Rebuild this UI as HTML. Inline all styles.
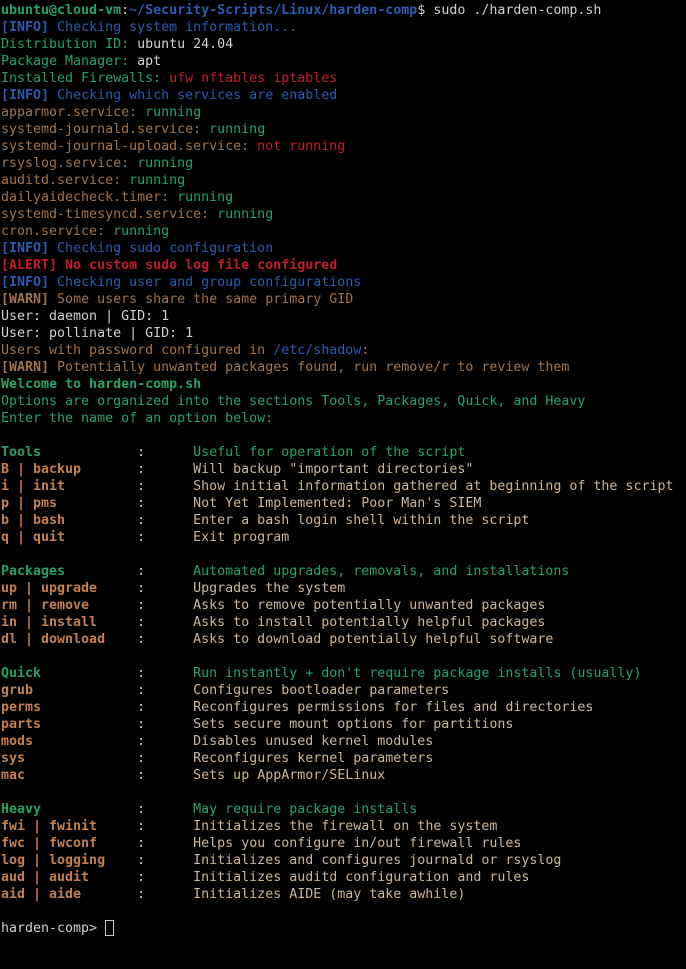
<!DOCTYPE html>
<html><head><meta charset="utf-8"><style>
html,body{margin:0;background:#000;width:686px;height:969px;overflow:hidden}
pre{margin:0;padding:2px 0 0 1px;font-family:"DejaVu Sans Mono","Liberation Mono",monospace;font-size:13.3px;line-height:17px;color:#d0d0d0;white-space:pre}
.g{color:#26a269}.b{color:#2a5cb0}.r{color:#c01c28}.o{color:#a2734c}.k{color:#c4814f;font-weight:bold}.d{color:#cdb597}.B{font-weight:bold}.gb{color:#26a269;font-weight:bold}
.cur{display:inline-block;width:9px;height:16px;border:1px solid #d0d0d0;vertical-align:-4px;box-sizing:border-box}
</style></head><body><pre><span class="gb">ubuntu@cloud-vm</span>:<span class="b B">~/Security-Scripts/Linux/harden-comp</span>$ sudo ./harden-comp.sh
<span class="b"><b>[INFO]</b> Checking system information...</span>
<span class="g">Distribution ID:</span> ubuntu 24.04
<span class="g">Package Manager:</span> apt
<span class="g">Installed Firewalls:</span> <span class="r">ufw nftables iptables</span>
<span class="b"><b>[INFO]</b> Checking which services are enabled</span>
<span class="o">apparmor.service:</span> <span class="g">running</span>
<span class="o">systemd-journald.service:</span> <span class="g">running</span>
<span class="o">systemd-journal-upload.service:</span> <span class="r">not running</span>
<span class="o">rsyslog.service:</span> <span class="g">running</span>
<span class="o">auditd.service:</span> <span class="g">running</span>
<span class="o">dailyaidecheck.timer:</span> <span class="g">running</span>
<span class="o">systemd-timesyncd.service:</span> <span class="g">running</span>
<span class="o">cron.service:</span> <span class="g">running</span>
<span class="b"><b>[INFO]</b> Checking sudo configuration</span>
<span class="r B">[ALERT] No custom sudo log file configured</span>
<span class="b"><b>[INFO]</b> Checking user and group configurations</span>
<span class="o"><b>[WARN]</b> Some users share the same primary GID</span>
User: daemon | GID: 1
User: pollinate | GID: 1
<span class="o">Users with password configured in <span class="b">/etc/shadow</span>:</span>
<span class="o"><b>[WARN]</b> Potentially unwanted packages found, run remove/r to review them</span>
<span class="gb">Welcome to harden-comp.sh</span>
<span class="g">Options are organized into the sections Tools, Packages, Quick, and Heavy</span>
<span class="g">Enter the name of an option below:</span>

<span class="gb">Tools</span>            :      <span class="g">Useful for operation of the script</span>
<span class="k">B | backup</span>       :      <span class="d">Will backup "important directories"</span>
<span class="k">i | init</span>         :      <span class="d">Show initial information gathered at beginning of the script</span>
<span class="k">p | pms</span>          :      <span class="d">Not Yet Implemented: Poor Man's SIEM</span>
<span class="k">b | bash</span>         :      <span class="d">Enter a bash login shell within the script</span>
<span class="k">q | quit</span>         :      <span class="d">Exit program</span>

<span class="gb">Packages</span>         :      <span class="g">Automated upgrades, removals, and installations</span>
<span class="k">up | upgrade</span>     :      <span class="d">Upgrades the system</span>
<span class="k">rm | remove</span>      :      <span class="d">Asks to remove potentially unwanted packages</span>
<span class="k">in | install</span>     :      <span class="d">Asks to install potentially helpful packages</span>
<span class="k">dl | download</span>    :      <span class="d">Asks to download potentially helpful software</span>

<span class="gb">Quick</span>            :      <span class="g">Run instantly + don't require package installs (usually)</span>
<span class="k">grub</span>             :      <span class="d">Configures bootloader parameters</span>
<span class="k">perms</span>            :      <span class="d">Reconfigures permissions for files and directories</span>
<span class="k">parts</span>            :      <span class="d">Sets secure mount options for partitions</span>
<span class="k">mods</span>             :      <span class="d">Disables unused kernel modules</span>
<span class="k">sys</span>              :      <span class="d">Reconfigures kernel parameters</span>
<span class="k">mac</span>              :      <span class="d">Sets up AppArmor/SELinux</span>

<span class="gb">Heavy</span>            :      <span class="g">May require package installs</span>
<span class="k">fwi | fwinit</span>     :      <span class="d">Initializes the firewall on the system</span>
<span class="k">fwc | fwconf</span>     :      <span class="d">Helps you configure in/out firewall rules</span>
<span class="k">log | logging</span>    :      <span class="d">Initializes and configures journald or rsyslog</span>
<span class="k">aud | audit</span>      :      <span class="d">Initializes auditd configuration and rules</span>
<span class="k">aid | aide</span>       :      <span class="d">Initializes AIDE (may take awhile)</span>

harden-comp&gt; <span class="cur"></span></pre></body></html>
